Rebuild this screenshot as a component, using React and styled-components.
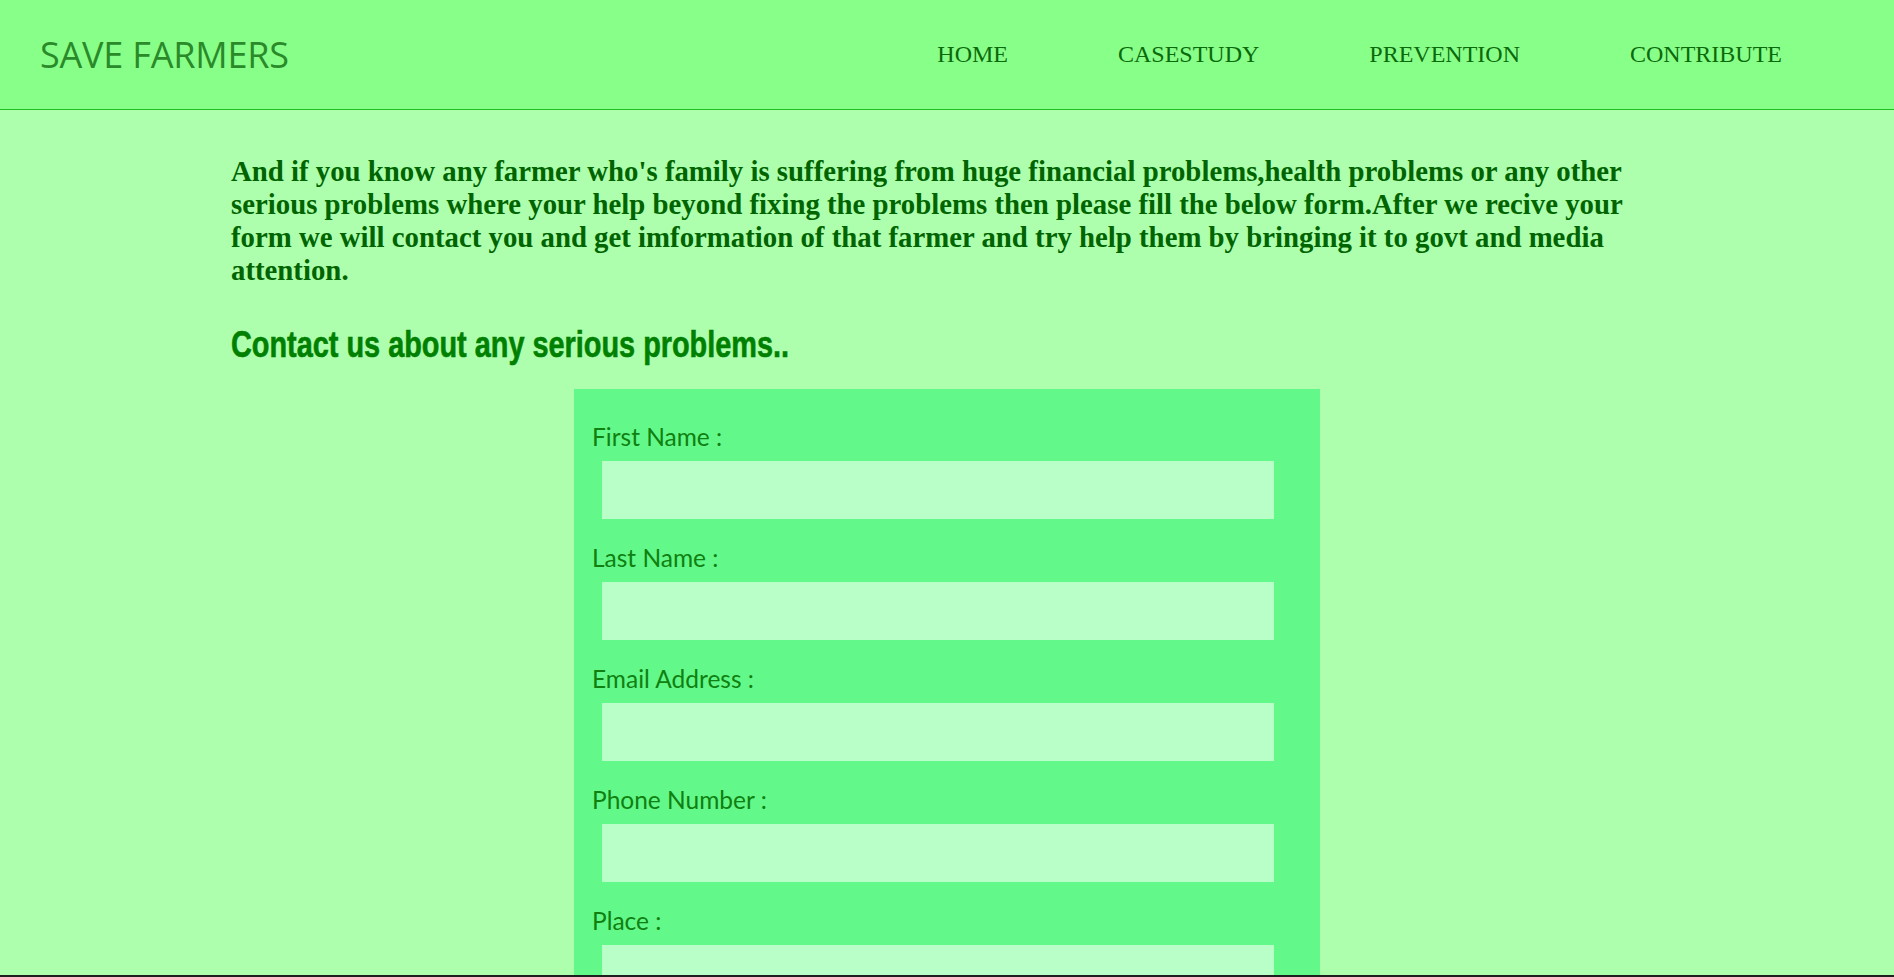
import styled, { createGlobalStyle } from "styled-components";

const GlobalStyle = createGlobalStyle`
  html, body {
    margin: 0;
    padding: 0;
    background-color: #adffad;
  }
  * {
    box-sizing: border-box;
  }
`;

const Header = styled.header`
  display: flex;
  align-items: center;
  justify-content: space-between;
  height: 110px;
  padding: 0 112px 0 40px;
  background-color: #88ff88;
  border-bottom: 1px solid #1fc01f;
`;

const Logo = styled.h1`
  margin: 0;
  font-family: "Open Sans", sans-serif;
  font-size: 36px;
  font-weight: 400;
  color: #2a8a2a;
  letter-spacing: -0.2px;
`;

const Nav = styled.nav`
  display: flex;
  gap: 110px;
`;

const NavLink = styled.a`
  font-family: "Liberation Serif", serif;
  font-size: 24px;
  color: #0b6a0b;
  text-decoration: none;
  cursor: pointer;
`;

const Contents = styled.main`
  width: 1432px;
  margin: 0 auto;
  padding-top: 45px;
`;

const Intro = styled.p`
  margin: 0;
  font-family: "Liberation Serif", serif;
  font-weight: 700;
  font-size: 28.8px;
  line-height: 33px;
  color: #006400;
`;

const Title = styled.h2`
  display: inline-block;
  margin: 33px 0 0;
  font-family: "Liberation Sans", sans-serif;
  font-size: 37px;
  font-weight: 700;
  line-height: 50px;
  color: #008000;
  -webkit-text-stroke: 0.6px #008000;
  transform: scaleX(0.78);
  transform-origin: left center;
  white-space: nowrap;
`;

const Form = styled.form`
  width: 746px;
  margin: 19px auto 0;
  padding: 34px 46px 20px 18px;
  background-color: #62f98a;
`;

const Field = styled.div`
  display: flex;
  flex-direction: column;
  margin-bottom: 25px;
`;

const Label = styled.label`
  font-family: "Lato", sans-serif;
  font-size: 24.5px;
  line-height: 28px;
  color: #108010;
  margin-bottom: 10px;
`;

const Input = styled.input`
  margin-left: 10px;
  height: 58px;
  padding: 0 14px;
  border: none;
  outline: none;
  background-color: #b8ffc8;
  font-family: "Lato", sans-serif;
  font-size: 20px;
  color: #0b6a0b;
`;

const BottomEdge = styled.div`
  position: fixed;
  left: 0;
  right: 0;
  bottom: 0;
  height: 2px;
  background-color: #1e1e1e;
`;

const fields = [
  { id: "first", label: "First Name :", type: "text" },
  { id: "last", label: "Last Name :", type: "text" },
  { id: "email", label: "Email Address :", type: "email" },
  { id: "phone", label: "Phone Number :", type: "tel" },
  { id: "place", label: "Place :", type: "text" },
];

function App() {
  return (
    <>
      <GlobalStyle />
      <Header>
        <Logo>SAVE FARMERS</Logo>
        <Nav>
          <NavLink>HOME</NavLink>
          <NavLink>CASESTUDY</NavLink>
          <NavLink>PREVENTION</NavLink>
          <NavLink>CONTRIBUTE</NavLink>
        </Nav>
      </Header>
      <Contents>
        <Intro>
          And if you know any farmer who's family is suffering from huge
          financial problems,health problems or any other serious problems
          where your help beyond fixing the problems then please fill the below
          form.After we recive your form we will contact you and get
          imformation of that farmer and try help them by bringing it to govt
          and media attention.
        </Intro>
        <Title>Contact us about any serious problems..</Title>
        <Form>
          {fields.map((f) => (
            <Field key={f.id}>
              <Label htmlFor={f.id}>{f.label}</Label>
              <Input id={f.id} type={f.type} />
            </Field>
          ))}
        </Form>
      </Contents>
      <BottomEdge />
    </>
  );
}

export default App;
